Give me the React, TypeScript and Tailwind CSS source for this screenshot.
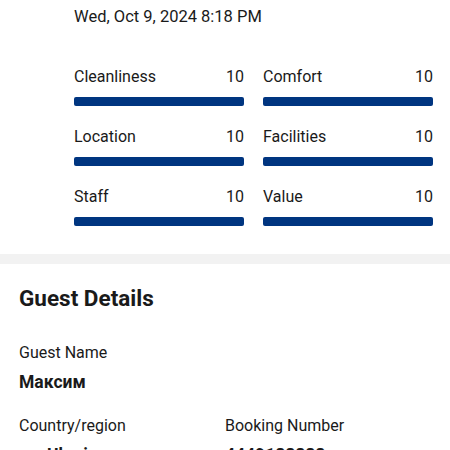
import React from "react";

const ratings = [
  ["Cleanliness", "10"],
  ["Comfort", "10"],
  ["Location", "10"],
  ["Facilities", "10"],
  ["Staff", "10"],
  ["Value", "10"],
];

export default function App() {
  return (
    <div className="w-[450px] h-[450px] overflow-hidden bg-white text-[#1a1a1a]" style={{ fontFamily: "Roboto, 'Noto Sans', sans-serif" }}>
      <div className="pl-[74px] pr-[17px] pt-[5px] pb-[28px]">
        <div className="text-[16.5px] leading-[24px]">Wed, Oct 9, 2024 8:18 PM</div>
        <div className="mt-[36px] grid grid-cols-2 gap-x-[19px] gap-y-[19px]">
          {ratings.map(([label, score]) => (
            <div key={label} className="flex flex-col">
              <div className="flex justify-between text-[16px] leading-[24px]">
                <span>{label}</span>
                <span>{score}</span>
              </div>
              <div className="mt-[8px] h-[9px] rounded-[2px] bg-[#003580]" />
            </div>
          ))}
        </div>
      </div>
      <div className="h-[10px] bg-[#f2f2f2]" />
      <div className="px-[19px] pt-[19px]">
        <div className="text-[22.5px] leading-[30px] font-bold">Guest Details</div>
        <div className="mt-[28px] text-[16px] leading-[24px]">Guest Name</div>
        <div className="mt-[4px] text-[17.5px] leading-[26px] font-bold">Максим</div>
        <div className="mt-[19px] grid grid-cols-2">
          <div>
            <div className="text-[16px] leading-[24px]">Country/region</div>
            <div className="mt-[4px] flex items-center gap-[14px] text-[17.5px] leading-[26px] font-bold">
              <span className="inline-flex flex-col w-[14px] h-[10px] overflow-hidden rounded-[1px]">
                <span className="flex-1 bg-[#0057b7]" />
                <span className="flex-1 bg-[#ffd700]" />
              </span>
              <span>Ukraine</span>
            </div>
          </div>
          <div>
            <div className="text-[16px] leading-[24px]">Booking Number</div>
            <div className="mt-[4px] text-[17.5px] leading-[26px] font-bold">4449188888</div>
          </div>
        </div>
      </div>
    </div>
  );
}
